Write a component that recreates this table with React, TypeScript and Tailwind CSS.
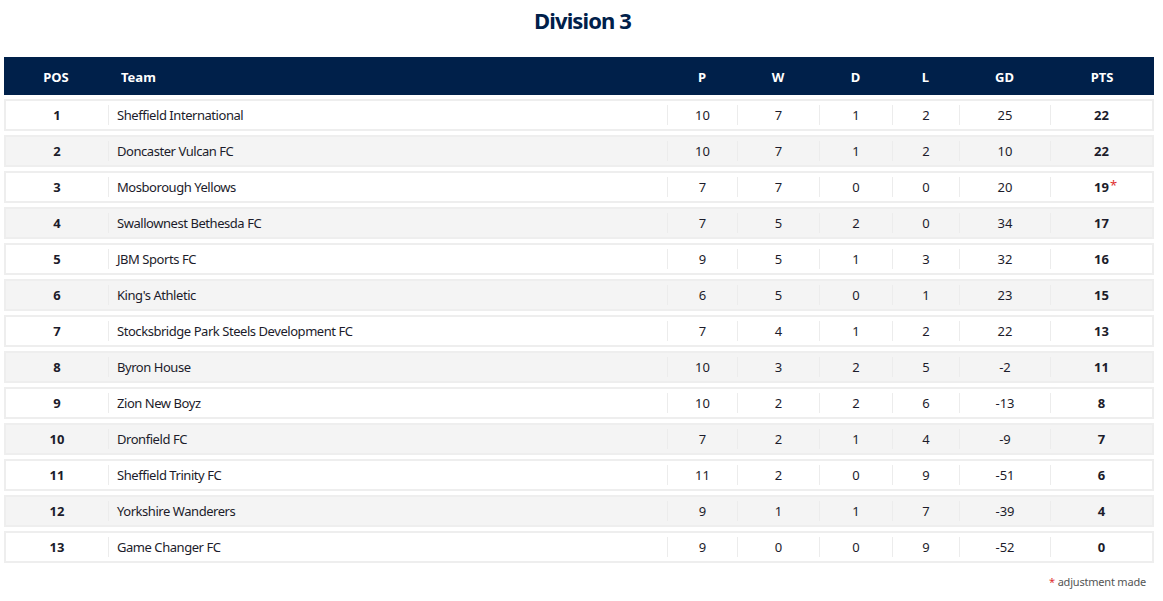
const rows: [number, string, number, number, number, number, number, number, boolean?][] = [
  [1, "Sheffield International", 10, 7, 1, 2, 25, 22],
  [2, "Doncaster Vulcan FC", 10, 7, 1, 2, 10, 22],
  [3, "Mosborough Yellows", 7, 7, 0, 0, 20, 19, true],
  [4, "Swallownest Bethesda FC", 7, 5, 2, 0, 34, 17],
  [5, "JBM Sports FC", 9, 5, 1, 3, 32, 16],
  [6, "King's Athletic", 6, 5, 0, 1, 23, 15],
  [7, "Stocksbridge Park Steels Development FC", 7, 4, 1, 2, 22, 13],
  [8, "Byron House", 10, 3, 2, 5, -2, 11],
  [9, "Zion New Boyz", 10, 2, 2, 6, -13, 8],
  [10, "Dronfield FC", 7, 2, 1, 4, -9, 7],
  [11, "Sheffield Trinity FC", 11, 2, 0, 9, -51, 6],
  [12, "Yorkshire Wanderers", 9, 1, 1, 7, -39, 4],
  [13, "Game Changer FC", 9, 0, 0, 9, -52, 0],
];

const headCols = "grid grid-cols-[104px_559px_70px_82px_73px_67px_91px_1fr]";
const rowCols = "grid grid-cols-[102px_559px_70px_82px_73px_67px_91px_1fr]";

function Cell({ children, divider = true, className = "" }: { children: React.ReactNode; divider?: boolean; className?: string }) {
  return (
    <div className={`flex items-center h-full ${className}`}>
      <div className={`flex items-center justify-center w-full h-[20px] pt-[2px] ${divider ? "border-l border-[#ececec]" : ""}`}>
        {children}
      </div>
    </div>
  );
}

export default function App() {
  return (
    <div className="w-[1163px] h-[601px] bg-white text-[#1c1c2b]" style={{ fontFamily: '"Noto Sans", "Open Sans", sans-serif' }}>
      <h1 className="text-center text-[22px] font-bold text-[#00204a] pt-[4px] pl-[2px] h-[57px] tracking-[-0.9px]">Division 3</h1>
      <div className="ml-[4px] w-[1150px]">
        <div className={`${headCols} h-[38px] pt-[3px] bg-[#00204a] text-white text-[13px] font-bold items-center`}>
          <div className="text-center">POS</div>
          <div className="pl-[13px]">Team</div>
          <div className="text-center">P</div>
          <div className="text-center">W</div>
          <div className="text-center">D</div>
          <div className="text-center">L</div>
          <div className="text-center">GD</div>
          <div className="text-center">PTS</div>
        </div>
        <div className="flex flex-col gap-[4px] mt-[4px]">
          {rows.map(([pos, team, p, w, d, l, gd, pts, adj], i) => (
            <div
              key={pos}
              className={`${rowCols} h-[32px] border-2 border-[#eeeeee] text-[13px] ${i % 2 === 0 ? "bg-white" : "bg-[#f4f4f4]"}`}
            >
              <Cell divider={false} className="font-bold">{pos}</Cell>
              <Cell>
                <span className="w-full pl-[8px] tracking-[-0.45px]">{team}</span>
              </Cell>
              <Cell>{p}</Cell>
              <Cell>{w}</Cell>
              <Cell>{d}</Cell>
              <Cell>{l}</Cell>
              <Cell>{gd}</Cell>
              <Cell className="font-bold">
                <span className="relative">
                  {pts}
                  {adj && <span className="absolute left-full top-[-2px] text-[#e0302f] ml-[1px] font-normal">*</span>}
                </span>
              </Cell>
            </div>
          ))}
        </div>
        <div className="text-right text-[11px] text-[#555] mt-[11px] pr-[8px] tracking-[-0.2px]">
          <span className="text-[#e0302f]">*</span> adjustment made
        </div>
      </div>
    </div>
  );
}
